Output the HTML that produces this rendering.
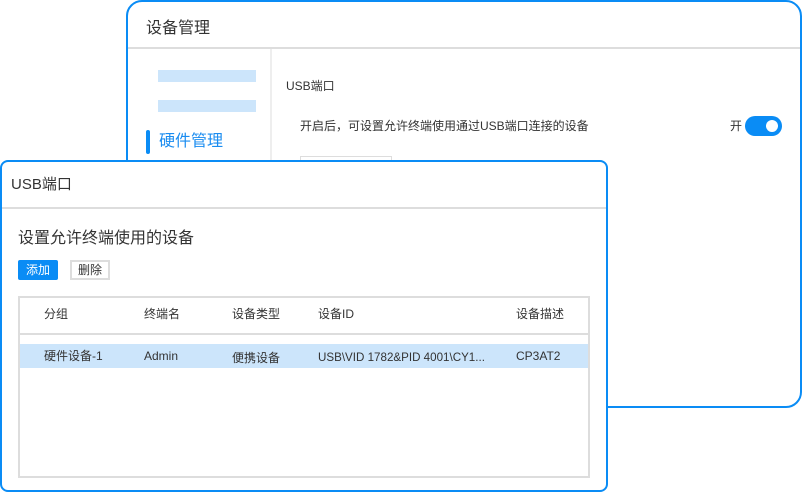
<!DOCTYPE html>
<html><head><meta charset="utf-8"><style>
*{margin:0;padding:0;box-sizing:border-box}
body{width:802px;height:492px;background:#fff;position:relative;overflow:hidden;font-family:"Liberation Sans","Noto Sans CJK SC",sans-serif;color:#333}
.a{position:absolute}
.t{position:absolute;white-space:nowrap;line-height:1}
</style></head><body>
<div class="a" style="left:126px;top:0;width:676px;height:408px;border:2px solid #0a8cf5;border-radius:16px;background:#fff"></div>
<div class="a" style="left:128px;top:47px;width:672px;height:2px;background:#ddd"></div>
<div class="a" style="left:270px;top:49px;width:2px;height:358px;background:#eee"></div>
<div class="t" style="left:146px;top:21px;font-size:16px">设备管理</div>
<div class="a" style="left:158px;top:70px;width:98px;height:12px;background:#cce5fb"></div>
<div class="a" style="left:158px;top:100px;width:98px;height:12px;background:#cce5fb"></div>
<div class="a" style="left:146px;top:130px;width:4px;height:24px;background:#0a8cf5;border-radius:2px"></div>
<div class="t" style="left:159px;top:134px;font-size:16px;color:#1a8cf0">硬件管理</div>
<div class="t" style="left:286px;top:80px;font-size:12px">USB端口</div>
<div class="t" style="left:300px;top:120px;font-size:12px">开启后，可设置允许终端使用通过USB端口连接的设备</div>
<div class="t" style="left:730px;top:120px;font-size:12px">开</div>
<div class="a" style="left:745px;top:116px;width:37px;height:20px;background:#0a8cf5;border-radius:10px"></div>
<div class="a" style="left:766px;top:120px;width:12px;height:12px;background:#fff;border-radius:6px"></div>
<div class="a" style="left:300px;top:156px;width:92px;height:10px;border:1px solid #ddd"></div>

<div class="a" style="left:0;top:160px;width:608px;height:332px;border:2px solid #0a8cf5;border-radius:8px;background:#fff"></div>
<div class="a" style="left:2px;top:207px;width:604px;height:2px;background:#ddd"></div>
<div class="t" style="left:11px;top:177px;font-size:15px">USB端口</div>
<div class="t" style="left:18px;top:231px;font-size:16px">设置允许终端使用的设备</div>
<div class="a" style="left:18px;top:260px;width:40px;height:20px;background:#0a8cf5;border-radius:2px"></div>
<div class="t" style="left:26px;top:264px;font-size:12px;color:#fff">添加</div>
<div class="a" style="left:70px;top:260px;width:40px;height:20px;border:2px solid #ddd"></div>
<div class="t" style="left:78px;top:264px;font-size:12px">删除</div>
<div class="a" style="left:18px;top:296px;width:572px;height:182px;border:2px solid #ddd"></div>
<div class="a" style="left:20px;top:333px;width:568px;height:2px;background:#ddd"></div>
<div class="a" style="left:20px;top:344px;width:568px;height:24px;background:#cce5fb"></div>
<div class="t" style="left:44px;top:308px;font-size:12px">分组</div>
<div class="t" style="left:144px;top:308px;font-size:12px">终端名</div>
<div class="t" style="left:232px;top:308px;font-size:12px">设备类型</div>
<div class="t" style="left:318px;top:308px;font-size:12px">设备ID</div>
<div class="t" style="left:516px;top:308px;font-size:12px">设备描述</div>
<div class="t" style="left:44px;top:350px;font-size:12px">硬件设备-1</div>
<div class="t" style="left:144px;top:350px;font-size:12px">Admin</div>
<div class="t" style="left:232px;top:352px;font-size:12px">便携设备</div>
<div class="t" style="left:318px;top:352px;font-size:11.6px">USB\VID 1782&amp;PID 4001\CY1...</div>
<div class="t" style="left:516px;top:350px;font-size:12px">CP3AT2</div>
</body></html>
